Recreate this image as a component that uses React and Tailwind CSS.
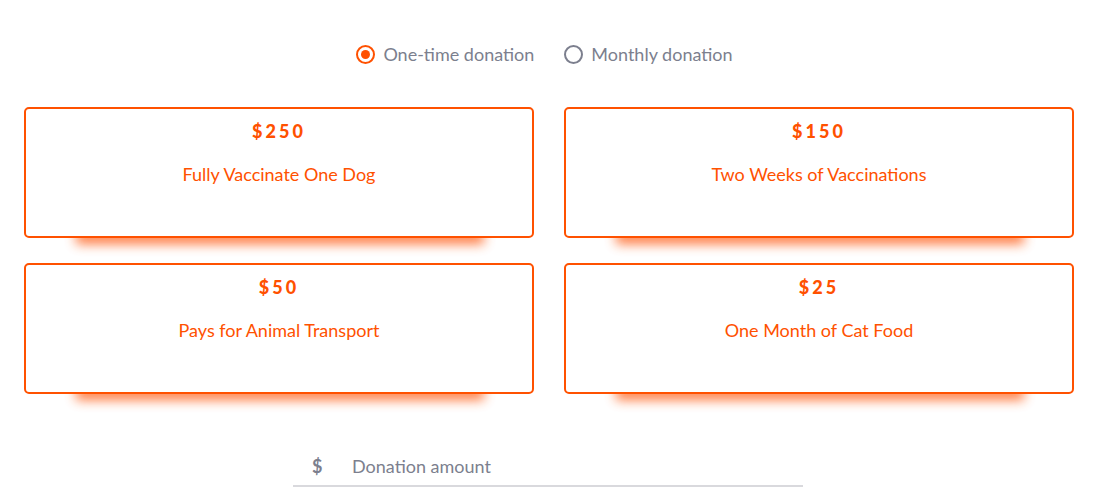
const options = [
  { amount: '$250', label: 'Fully Vaccinate One Dog' },
  { amount: '$150', label: 'Two Weeks of Vaccinations' },
  { amount: '$50', label: 'Pays for Animal Transport' },
  { amount: '$25', label: 'One Month of Cat Food' },
]

function Radio({ checked, label }) {
  return (
    <label className="flex items-center gap-[8px] cursor-pointer">
      <span
        className={`flex h-[19px] w-[19px] items-center justify-center rounded-full border-2 ${
          checked ? 'border-[#ff5100]' : 'border-[#7c7f8e]'
        }`}
      >
        {checked && <span className="h-[9px] w-[9px] rounded-full bg-[#ff5100]" />}
      </span>
      <span className="text-[18px] text-[#7c7f8e]">{label}</span>
    </label>
  )
}

function DonationCard({ amount, label }) {
  return (
    <div className="relative isolate">
      {/* soft orange glow under the card */}
      <div className="absolute -z-10 left-[52px] right-[50px] bottom-[-6px] h-[14px] bg-[#ff5a12] opacity-80 blur-[6px]" />
      <div className="flex h-[131px] flex-col items-center rounded-[5px] border-2 border-[#ff5100] bg-white pt-[10px] text-[#ff5100]">
        <div className="text-[18px] font-black tracking-[3px] leading-[24px]">{amount}</div>
        <div className="mt-[19px] text-[18px] leading-[24px]">{label}</div>
      </div>
    </div>
  )
}

export default function App() {
  return (
    <div className="min-h-[499px] bg-white font-['Lato','Liberation_Sans',sans-serif]">
      <div className="flex justify-center gap-[30px] pt-[41px] pr-[7px]">
        <Radio checked label="One-time donation" />
        <Radio label="Monthly donation" />
      </div>

      <div className="mt-[39px] grid grid-cols-2 gap-x-[30px] gap-y-[25px] pl-[24px] pr-[22px]">
        {options.map((o) => (
          <DonationCard key={o.amount} {...o} />
        ))}
      </div>

      <div className="mx-auto mt-[59px] w-[510px] border-b-2 border-[#d9d9dd]">
        <div className="flex items-center pb-[5px] pl-[19px] text-[18px] text-[#7c7f8e]">
          <span className="w-[40px] font-bold">$</span>
          <input
            className="flex-1 bg-transparent outline-none placeholder:text-[#7c7f8e]"
            placeholder="Donation amount"
          />
        </div>
      </div>
    </div>
  )
}
